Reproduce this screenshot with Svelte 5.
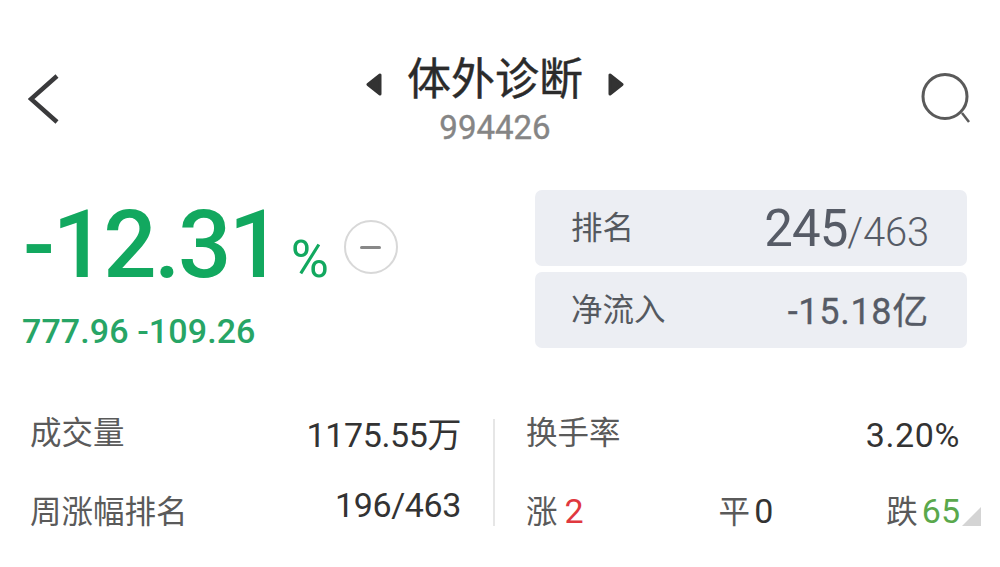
<script>
  const left = [
    { label: '成交量', value: '1175.55万' },
    { label: '周涨幅排名', value: '196/463' }
  ];
</script>

<main class="page">
  <header class="top">
    <svg class="back" width="34" height="52" viewBox="0 0 34 52"><path d="M29 2 L3 25 L29 48" fill="none" stroke="#3a3a3c" stroke-width="4.5"/></svg>
    <div class="center">
      <div class="title-row">
        <svg class="tri" width="16" height="23" viewBox="0 0 16 23"><path d="M14 2 V21 L2 11.5 Z" fill="#333" stroke="#333" stroke-width="3" stroke-linejoin="round"/></svg>
        <h1>体外诊断</h1>
        <svg class="tri" width="16" height="23" viewBox="0 0 16 23"><path d="M2 2 V21 L14 11.5 Z" fill="#333" stroke="#333" stroke-width="3" stroke-linejoin="round"/></svg>
      </div>
      <div class="code">994426</div>
    </div>
    <svg class="search" width="50" height="50" viewBox="0 0 50 50"><circle cx="24" cy="23.5" r="22" fill="none" stroke="#5a5a5a" stroke-width="3"/><path d="M41 40 L48 49" stroke="#5a5a5a" stroke-width="2.5" fill="none"/></svg>
  </header>

  <section class="quote">
    <div class="price">
      <div class="pct-row">
        <span class="pct">-12.31</span><span class="unit">%</span>
        <span class="minus"><i></i></span>
      </div>
      <div class="sub">777.96 -109.26</div>
    </div>
    <div class="cards">
      <div class="card"><span class="card-label">排名</span><span class="rank"><b>245</b><em>/463</em></span></div>
      <div class="card"><span class="card-label">净流入</span><span class="flow">-15.18亿</span></div>
    </div>
  </section>

  <section class="stats">
    <div class="col left">
      {#each left as row, i}
        <div class="row"><span class="lbl">{row.label}</span><span class="val" class:raised={i === 1}>{row.value}</span></div>
      {/each}
    </div>
    <div class="col right">
      <div class="row"><span class="lbl">换手率</span><span class="val wide">3.20%</span></div>
      <div class="row counts">
        <span class="lbl">涨 <span class="n up">2</span></span>
        <span class="lbl mid tight">平 <span class="n">0</span></span>
        <span class="lbl tight">跌 <span class="n down">65</span></span>
      </div>
      <span class="corner"></span>
    </div>
  </section>
</main>

<style>
  :global(body) { margin: 0; background: #fff; }
  .page {
    width: 1000px; height: 567px; overflow: hidden; box-sizing: border-box;
    padding-top: 48px;
    font-family: Roboto, "Noto Sans CJK SC", sans-serif;
    color: #333;
  }
  .top {
    display: grid; grid-template-columns: 338px auto 1fr; align-items: start;
    padding: 0 29px 0 28px; height: 102px;
  }
  .back { margin-top: 26px; }
  .search { justify-self: end; margin-top: 25px; }
  .center { display: flex; flex-direction: column; align-items: center; }
  .title-row { display: flex; align-items: center; gap: 25px; height: 56px; }
  .tri { margin-top: 17px; }
  h1 { margin: 0; font-size: 44px; line-height: 56px; font-weight: 400; -webkit-text-stroke: .4px #2b2b2b; color: #2b2b2b; font-family: "Noto Sans CJK SC", sans-serif; }
  .code { font-size: 33px; line-height: 36px; font-weight: 400; -webkit-text-stroke: .4px #858585; color: #858585; margin-top: 6px; }

  .quote { display: flex; justify-content: space-between; padding: 40px 33px 0 23px; }
  .pct-row { display: flex; align-items: baseline; height: 110px; }
  .pct { font-size: 94px; line-height: 110px; font-weight: 500; color: #12a85f; letter-spacing: -2.5px; }
  .unit { font-size: 52px; color: #12a85f; margin-left: 11px; }
  .minus { box-sizing: border-box; align-self: flex-start; width: 54px; height: 54px; border: 2px solid #d8d8d8; border-radius: 50%; margin: 30px 0 0 15px; display: flex; align-items: center; justify-content: center; }
  .minus i { display: block; width: 21px; height: 3px; background: #888; border-radius: 2px; }
  .sub { font-size: 34px; line-height: 36px; font-weight: 500; color: #27a566; letter-spacing: .1px; margin-top: 13px; margin-left: -1px; }

  .cards { width: 432px; display: flex; flex-direction: column; gap: 6px; }
  .card {
    height: 76px; background: #eceef3; border-radius: 7px; display: flex;
    justify-content: space-between; align-items: center; padding: 0 38px 0 36px;
    box-sizing: border-box;
  }
  .card-label { font-size: 31.5px; color: #55595f; font-family: "Noto Sans CJK SC", sans-serif; margin-bottom: 6px; }
  .rank { display: flex; align-items: baseline; color: #565b66; }
  .rank b { font-size: 51px; font-weight: 400; letter-spacing: -1px; }
  .rank em { font-style: normal; font-size: 40px; font-weight: 300; letter-spacing: -.2px; }
  .flow { font-size: 36px; font-weight: 400; -webkit-text-stroke: .3px #565b66; color: #565b66; letter-spacing: .7px; margin-bottom: 4px; }

  .stats { display: grid; grid-template-columns: 495px 1fr; margin-top: 70px; padding-right: 40px; }
  .col { display: flex; flex-direction: column; gap: 49px; height: 107px; position: relative; }
  .left { padding: 0 32px 0 30px; border-right: 2px solid #e6e6e6; }
  .right { padding-left: 31px; }
  .row { display: flex; justify-content: space-between; align-items: flex-start; height: 30px; margin-top: -4px; }
  .row + .row { margin-top: 0; }
  .lbl { font-size: 31.5px; line-height: 30px; color: #5a5a5a; font-family: "Noto Sans CJK SC", sans-serif; }
  .val { font-size: 34px; line-height: 30px; color: #333; letter-spacing: -.4px; margin-top: 5px; }
  .val.wide { letter-spacing: .6px; }
  .val.raised { margin-top: -4px; }
  .n { font-family: Roboto, sans-serif; font-size: 34px; color: #333; }
  .mid { margin-left: 22px; }
  .tight { word-spacing: -3px; }
  .up { color: #e0383e; }
  .down { color: #5aa84c; }
  .corner {
    position: absolute; right: -21px; bottom: 0; width: 0; height: 0;
    border-left: 19px solid transparent; border-bottom: 19px solid #d4d4d4;
  }
</style>
